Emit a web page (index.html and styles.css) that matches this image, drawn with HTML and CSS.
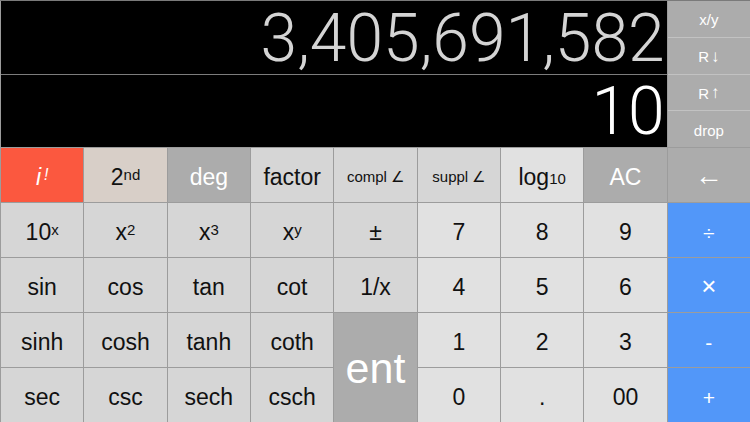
FILE: index.html
```html
<!DOCTYPE html>
<html>
<head>
<meta charset="utf-8">
<link rel="stylesheet" href="styles.css">
</head>
<body>
<div class="app">
  <div class="display">
    <div class="line line-y">3,405,691,582</div>
    <div class="line line-x">10</div>
  </div>
  <div class="stack">
    <div class="skey">x/y</div>
    <div class="skey">R<span class="arr">↓</span></div>
    <div class="skey">R<span class="arr">↑</span></div>
    <div class="skey">drop</div>
  </div>

  <div class="key red"><span class="ital">i</span><sup class="ital">!</sup></div>
  <div class="key beige">2<sup>nd</sup></div>
  <div class="key gray">deg</div>
  <div class="key fn">factor</div>
  <div class="key fn small">compl ∠</div>
  <div class="key fn small">suppl ∠</div>
  <div class="key num">log<sub>10</sub></div>
  <div class="key gray">AC</div>
  <div class="key gray back">←</div>

  <div class="key fn">10<sup>x</sup></div>
  <div class="key fn">x<sup>2</sup></div>
  <div class="key fn">x<sup>3</sup></div>
  <div class="key fn">x<sup>y</sup></div>
  <div class="key fn">±</div>
  <div class="key num">7</div>
  <div class="key num">8</div>
  <div class="key num">9</div>
  <div class="key blue">÷</div>

  <div class="key fn">sin</div>
  <div class="key fn">cos</div>
  <div class="key fn">tan</div>
  <div class="key fn">cot</div>
  <div class="key fn">1/x</div>
  <div class="key num">4</div>
  <div class="key num">5</div>
  <div class="key num">6</div>
  <div class="key blue times">×</div>

  <div class="key fn">sinh</div>
  <div class="key fn">cosh</div>
  <div class="key fn">tanh</div>
  <div class="key fn">coth</div>
  <div class="key gray ent">ent</div>
  <div class="key num">1</div>
  <div class="key num">2</div>
  <div class="key num">3</div>
  <div class="key blue">-</div>

  <div class="key fn">sec</div>
  <div class="key fn">csc</div>
  <div class="key fn">sech</div>
  <div class="key fn">csch</div>
  <div class="key num">0</div>
  <div class="key num">.</div>
  <div class="key num">00</div>
  <div class="key blue">+</div>
</div>
</body>
</html>
```

FILE: styles.css
```css
* { box-sizing: border-box; }
html, body { margin: 0; padding: 0; }
body {
  width: 750px;
  height: 422px;
  overflow: hidden;
  background: #000;
  font-family: "Liberation Sans", Arial, sans-serif;
}
.app {
  width: 750px;
  height: 422px;
  display: grid;
  grid-template-columns: repeat(9, 1fr);
  grid-template-rows: 146px repeat(5, 1fr);
  gap: 1px;
  background: #9c9c9c;
  border-top: 1px solid #7a7a7a;
  padding-left: 1px;
}
.display {
  grid-column: 1 / 9;
  display: flex;
  flex-direction: column;
  gap: 1px;
  background: #7c7c7c;
}
.line {
  flex: 1;
  background: #000;
  display: flex;
  align-items: center;
  justify-content: flex-end;
  padding-right: 2px;
  font-family: Roboto, "Liberation Sans", sans-serif;
  font-weight: 300;
  font-size: 66px;
  line-height: 1;
}
.line-y { color: #d4d4d4; padding-top: 3px; }
.line-x { color: #ffffff; padding-top: 3px; }
.stack {
  display: flex;
  flex-direction: column;
  gap: 1px;
  background: #c2c2c2;
}
.skey {
  flex: 1;
  background: #acacac;
  color: #fff;
  font-size: 15px;
  display: flex;
  align-items: center;
  justify-content: center;
  padding-top: 2px;
}
.arr { font-size: 17px; margin-left: 2px; }
.key {
  display: flex;
  align-items: center;
  justify-content: center;
  font-size: 23px;
  color: #111;
  padding-top: 5px;
}
.key sup { font-size: 15px; position: relative; top: -3px; }
.key sub { font-size: 15px; position: relative; top: 1px; }
.fn { background: #d6d6d6; }
.num { background: #e1e1e1; }
.gray { background: #acacac; color: #fff; }
.beige { background: #d8cfc8; }
.red { background: #fb583f; color: #fff; }
.blue { background: #5297f9; color: #fff; font-size: 21px; }
.times { font-size: 26px; padding-top: 3px; }
.small { font-size: 15px; padding-top: 3px; }
.ital { font-style: italic; }
.red sup { font-size: 16px; margin-left: 3px; }
.back { font-size: 28px; padding-top: 2px; }
.ent { grid-row: span 2; font-size: 43px; padding-top: 2px; }
```
